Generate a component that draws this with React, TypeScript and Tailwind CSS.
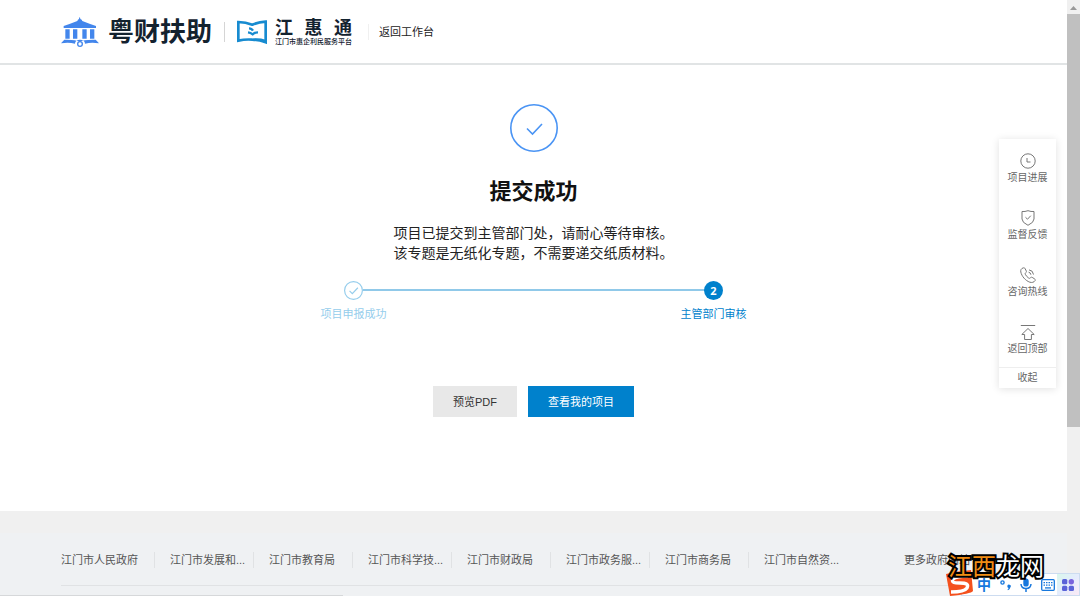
import { ReactNode } from 'react';

const departments = [
  '江门市发展和...',
  '江门市教育局',
  '江门市科学技...',
  '江门市财政局',
  '江门市政务服...',
  '江门市商务局',
  '江门市自然资...',
];

const App = () => (
  <div
    lang="zh-CN"
    className="relative flex h-screen w-full overflow-hidden bg-white font-['Liberation_Sans','Noto_Sans_CJK_SC',sans-serif] text-[11px] leading-4 text-[#222]"
  >
    <div className="flex min-w-0 flex-1 flex-col">
      <Header />
      <main className="flex flex-col items-center pt-[39px] pb-[94px]">
        <CheckCircle className="size-12 text-[#4a94f4]" strokeWidth={1.6} />
        <h1 className="mt-6 text-[22px] leading-8 font-bold text-[#111]">提交成功</h1>
        <p className="mt-[15px] text-sm leading-5">
          项目已提交到主管部门处，请耐心等待审核。
          <br />
          该专题是无纸化专题，不需要递交纸质材料。
        </p>
        <Steps />
        <div className="mt-16 flex gap-[11px]">
          <button type="button" className="h-[31px] bg-[#e8e8e8] px-5 text-[#333]">
            预览PDF
          </button>
          <button type="button" className="h-[31px] bg-[#0081cc] px-5 text-white">
            查看我的项目
          </button>
        </div>
      </main>
      <Footer />
    </div>
    <ScrollRail />
    <SidePanel />
    <InputBar />
  </div>
);

const Header = () => (
  <header className="flex h-[65px] shrink-0 items-center border-b-2 border-[#e1e4e5] pl-[61px]">
    <PavilionLogo />
    <span className="ml-[9px] text-[26px] leading-8 font-bold text-[#13222f]">粤财扶助</span>
    <span className="mx-3 h-5 w-px bg-[#d5d5d5]" />
    <BookLogo />
    <div className="ml-2 w-[77px] text-[#13222f]">
      <div className="flex justify-between text-lg leading-5 font-bold">
        <span>江</span>
        <span>惠</span>
        <span>通</span>
      </div>
      <div className="text-[7px] leading-2 font-medium whitespace-nowrap">江门市惠企利民服务平台</div>
    </div>
    <span className="ml-4 h-4 w-px bg-[#f0f0f0]" />
    <a href="#workbench" className="ml-[10px]">
      返回工作台
    </a>
  </header>
);

const Steps = () => (
  <ol className="mt-[18px] flex w-full max-w-[426px]">
    <li className="flex w-[66px] flex-col items-center text-[#95cdec]">
      <CheckCircle className="size-[19px]" strokeWidth={3} />
      <span className="mt-[6px]">项目申报成功</span>
    </li>
    <li aria-hidden="true" className="-mx-6 mt-2 h-[2px] flex-1 bg-[#90c9e9]" />
    <li className="flex w-[66px] flex-col items-center text-[#0081cc]">
      <span className="flex size-[19px] items-center justify-center rounded-full bg-[#0081cc] font-['Open_Sans',sans-serif] font-bold text-white">
        2
      </span>
      <span className="mt-[6px]">主管部门审核</span>
    </li>
  </ol>
);

const Footer = () => (
  <footer className="flex-1 border-t-[22px] border-[#f0f0f0] bg-[#eff1f3] text-[#555]">
    <div className="mx-[61px] border-b border-[#e0e2e4]">
      <nav className="flex h-[52px] items-center pt-[2px]">
        <a href="#gov" className="pr-4 whitespace-nowrap">
          江门市人民政府
        </a>
        {departments.map((name) => (
          <a key={name} href="#dept" className="w-[99px] border-l border-[#e0e2e4] pl-[15px] whitespace-nowrap">
            {name}
          </a>
        ))}
        <a href="#more" className="ml-auto w-[102px] whitespace-nowrap">
          更多政府网站
        </a>
      </nav>
    </div>
    <div className="mt-[9px] h-px w-[343px] bg-[#d6d8da]" />
  </footer>
);

const ScrollRail = () => (
  <div className="flex w-[13px] shrink-0 flex-col items-center bg-[#f0f0f0]">
    <svg viewBox="0 0 13 14" className="h-[14px] w-full shrink-0">
      <path d="M3 10 6.5 6 10 10Z" fill="#999" />
    </svg>
    <div className="h-[413px] w-full bg-[#c0c0c0]" />
  </div>
);

const SidePanel = () => (
  <aside className="absolute top-[139px] right-6 w-[57px] bg-white text-[10px] text-[#666] shadow-[0_1px_8px_rgba(0,0,0,0.12)]">
    <SideItem label="项目进展">
      <circle cx="8" cy="8" r="7.2" />
      <path d="M7 5v4h3.5" />
    </SideItem>
    <SideItem label="监督反馈">
      <path d="M2 1.5q3 .3 6-.8 3 1.100 6 .8V9q0 3.500-6 6.300Q2 12.500 2 9Z" />
      <path d="m5.500 7.300 2 1.900 3.300-3.500" />
    </SideItem>
    <SideItem label="咨询热线">
      <path d="M3.200.9C1.300 1.400.4 3 .8 5c1 4.400 4.600 8.600 9 10.200 2 .6 4.200.2 5.300-1.600.4-.7.100-1.300-.5-1.700l-2.400-1.500c-.7-.4-1.300-.2-1.800.4-.6.7-1.100.7-1.800.2-1.400-1-2.600-2.200-3.300-3.700-.3-.6-.2-1 .4-1.500.7-.5.9-1 .6-1.800L5 1.500C4.700.8 4 .7 3.200.9Z" />
      <path d="M8.600 5.200q2 .3 2.300 2.500M9 2.900q4 .4 4.500 4.600" />
    </SideItem>
    <SideItem label="返回顶部">
      <path d="M.8 1.500h14.400" />
      <path d="M8 4.500 1.800 10.500h2.800v5h6.800v-5h2.800Z" />
    </SideItem>
    <button type="button" className="block h-[21px] w-full border-t border-[#eee]">
      收起
    </button>
  </aside>
);

const SideItem = ({ label, children }: { label: string; children: ReactNode }) => (
  <button type="button" className="flex w-full flex-col items-center gap-px pt-[14px] pb-[10px]">
    <svg viewBox="0 0 16 16" className="size-4" fill="none" stroke="#777" strokeWidth="1">
      {children}
    </svg>
    <span className="whitespace-nowrap">{label}</span>
  </button>
);

const InputBar = () => (
  <>
    <div className="absolute right-0 bottom-0 flex h-[23px] w-[119px] items-center justify-end border border-[#cddcf0] bg-white text-[#1677dd]">
      <span className="text-sm leading-4 font-bold">中</span>
      <svg viewBox="0 0 14 14" className="ml-2 size-[14px]">
        <circle cx="3.500" cy="4.500" r="1.600" fill="none" stroke="currentColor" strokeWidth="1.400" />
        <path d="M8.300 8.200a1.700 1.700 0 1 1 3 1.200q-.4 2-2.400 2.800l-.4-.7q1-.7 1.100-1.600-1.200-.2-1.300-1.700Z" fill="currentColor" />
      </svg>
      <svg viewBox="0 0 14 14" className="ml-[6px] size-[14px]" fill="none" stroke="currentColor" strokeWidth="1.500">
        <rect x="4.300" y=".4" width="5.400" height="8.200" rx="2.700" fill="currentColor" stroke="none" />
        <path d="M2 6q.3 4.500 5 4.500T12 6M7 10.500V14" />
      </svg>
      <svg viewBox="0 0 14 12" className="ml-2 h-3 w-[14px]" fill="none" stroke="currentColor" strokeWidth="1.300">
        <rect x=".7" y=".7" width="12.600" height="10.600" rx="1" />
        <path d="M2.500 3.700h9M2.500 6.200h9" strokeDasharray="1.500 1" />
        <path d="M4 8.900h6" />
      </svg>
      <span className="ml-[2px] flex h-full w-[22px] items-center justify-center bg-linear-to-br from-[#d9f7ec] via-[#e4ecfd] to-[#fbeaf5]">
        <svg viewBox="0 0 12 12" className="size-3" fill="#5a62d8">
          <rect width="5.300" height="5.300" rx="1.500" />
          <circle cx="9.300" cy="2.700" r="2.700" fill="#7a63dc" />
          <rect y="6.700" width="5.300" height="5.300" rx="1.500" />
          <rect x="6.700" y="6.700" width="5.300" height="5.300" rx="1.500" />
        </svg>
      </span>
    </div>
    <svg viewBox="0 0 28 26" className="absolute right-[106px] bottom-0 h-[26px] w-7">
      <path d="M0 4Q12 1 25 0l2 21q-2 3-23 5Z" fill="#f4511e" />
      <path
        d="M22 6Q10 6 7 9c-2 4 2 4 7 4 6 0 9 1 7 5-2 3-9 4-16 4"
        fill="none"
        stroke="#fff"
        strokeWidth="3.400"
      />
    </svg>
    <div className="absolute right-9 bottom-[15px] text-2xl leading-7 text-white [-webkit-text-stroke:4px_black] [paint-order:stroke_fill]">
      <span className="text-[#f08c14]">江西</span>龙网
    </div>
  </>
);

const CheckCircle = ({ className, strokeWidth }: { className: string; strokeWidth: number }) => (
  <svg viewBox="0 0 48 48" className={className} fill="none" stroke="currentColor" strokeWidth={strokeWidth}>
    <circle cx="24" cy="24" r={24 - strokeWidth / 2} />
    {strokeWidth > 2 ? <path d="m14 25 7 7 14-15" /> : <path d="m17 24.500 5.500 5.500 9.500-10" />}
  </svg>
);

const PavilionLogo = () => (
  <svg viewBox="0 0 114 90" className="h-[30px] w-[38px]" fill="#4386ec">
    <path d="M56 0q2 3 2 6 5 2 6 6 20 8 41 15v6H8v-6q21-7 41-15 1-4 5-6 0-3 2-6Z" />
    <path d="M13 37h13v28H13ZM36 37h13v28H36ZM64 37h13v28H64ZM87 37h13v28H87Z" />
    <path d="M10 68q34-1 46 6 12-7 48-6l10 11q-23-4-42 1a15 12 0 0 0-30 0q-19-5-42-1Z" />
    <circle cx="57" cy="81" r="7" fill="none" stroke="#4386ec" strokeWidth="4" />
  </svg>
);

const BookLogo = () => (
  <svg viewBox="0 0 90 72" className="h-6 w-[30px]" fill="none" stroke="#178bd0">
    <path d="M4 6q22 0 42 8 20-8 40-9v62q-20-7-40-8-20-2-42 3Z" strokeWidth="8" />
    <path d="M46 56q18-4 40 3v9q-20-8-40-12Z" fill="#178bd0" stroke="none" />
    <path d="M36 25q8 0 12 7M33 37q8 1 14 6 7-6 16-6" strokeWidth="7" />
  </svg>
);

export default App;
